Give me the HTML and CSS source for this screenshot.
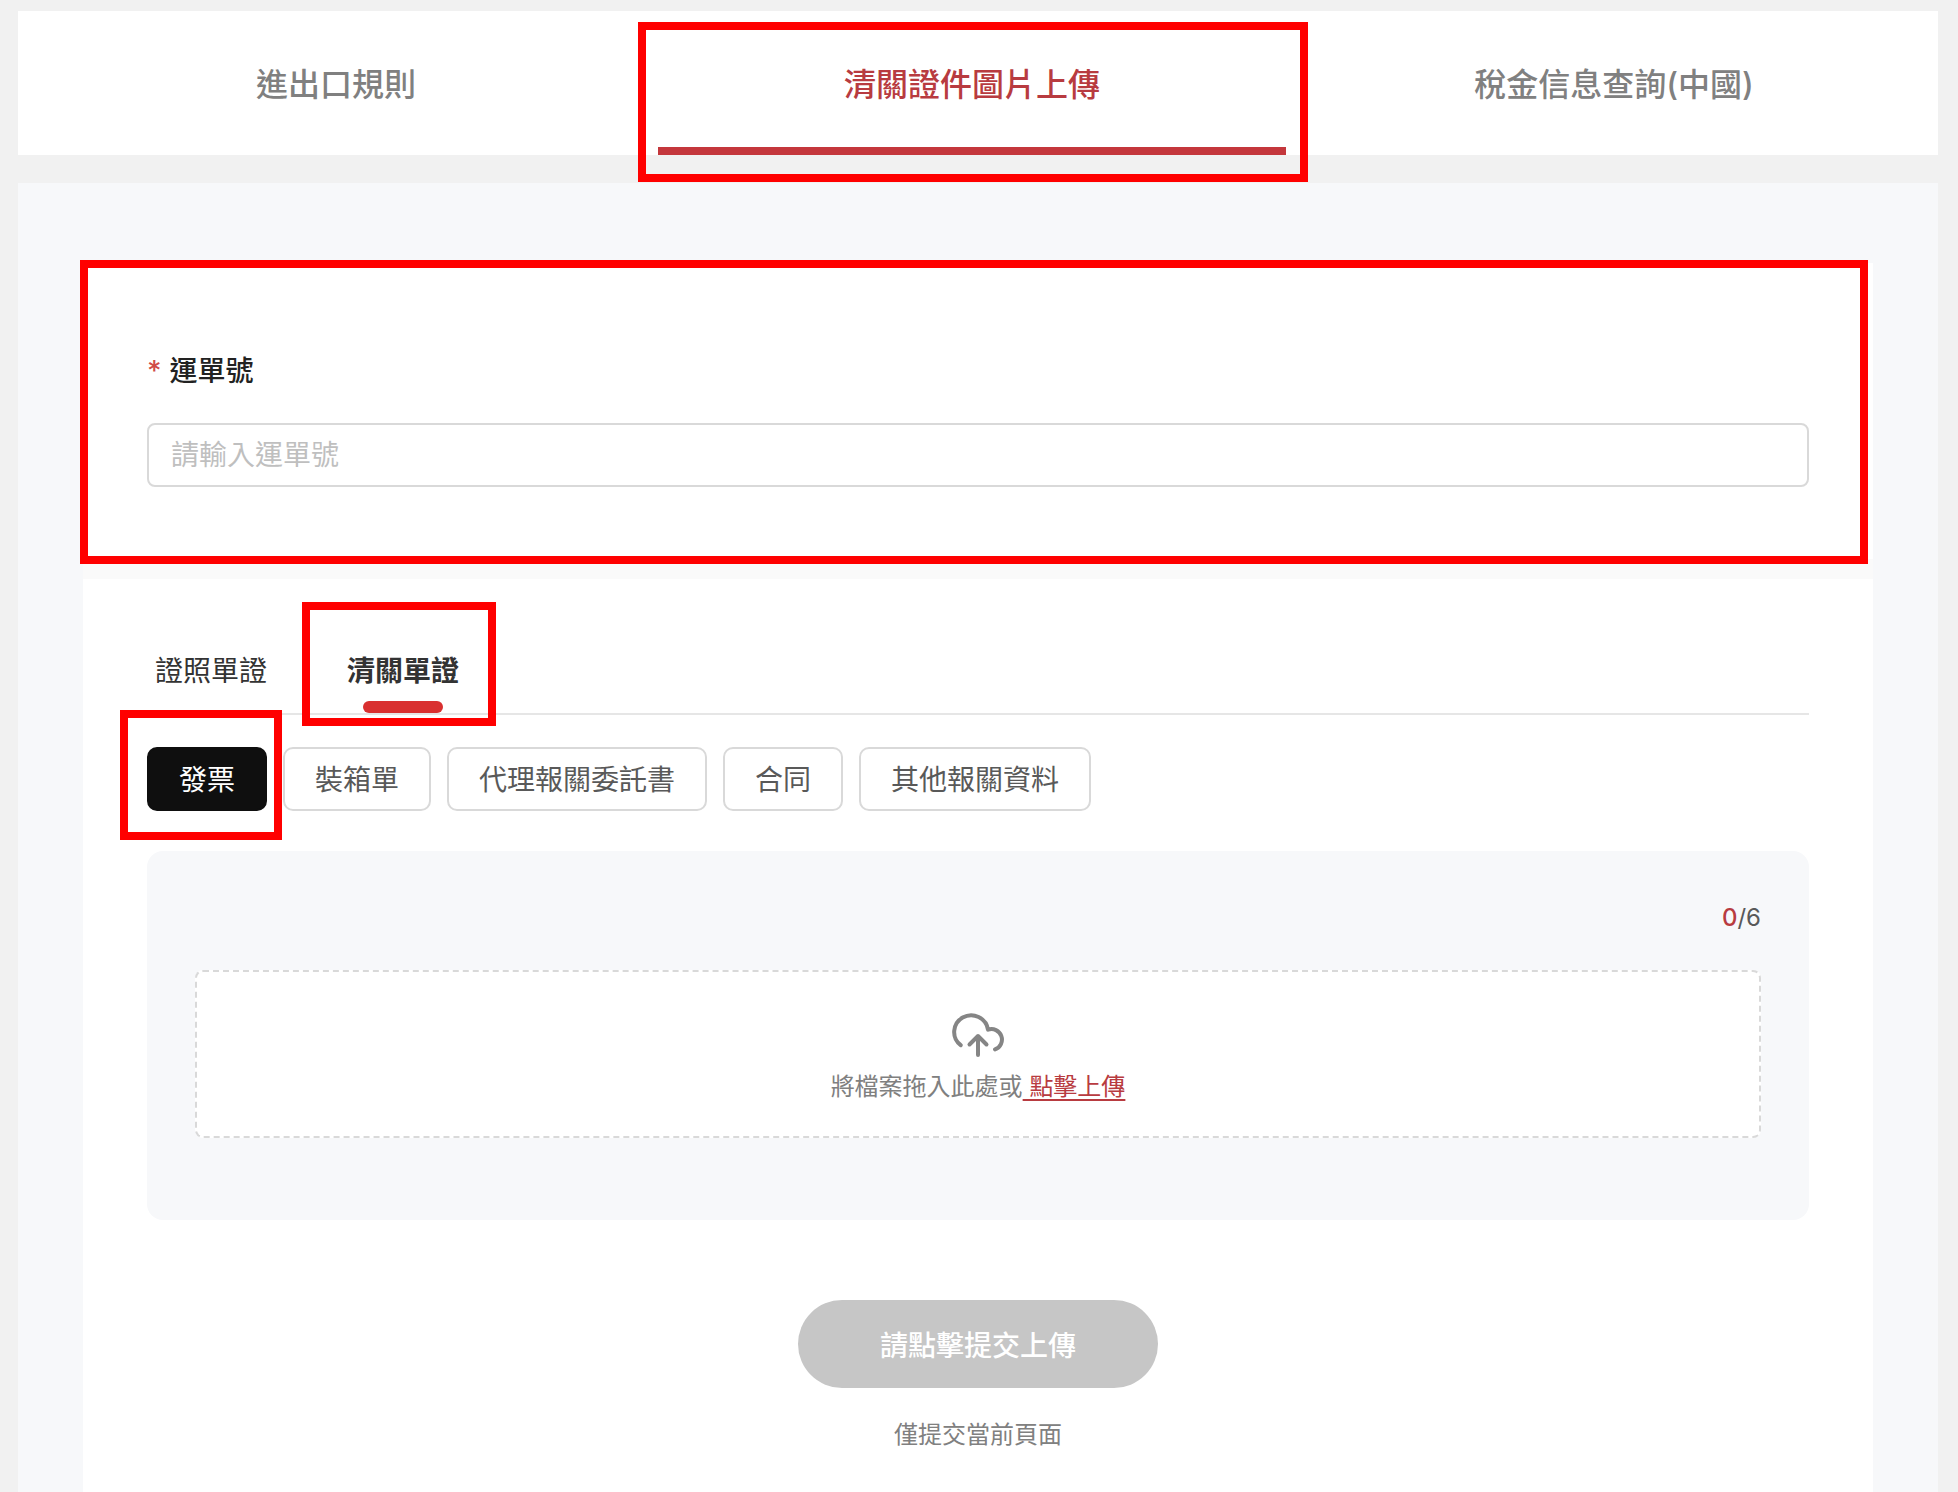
FILE: index.html
```
<!DOCTYPE html>
<html lang="zh-Hant">
<head>
  <meta charset="UTF-8">
  <meta name="viewport" content="width=device-width, initial-scale=1.0">
  <title>清關證件圖片上傳</title>
  <link rel="stylesheet" href="styles.css">
</head>
<body>
  <nav class="main-tabs">
    <button type="button" class="main-tab">進出口規則</button>
    <button type="button" class="main-tab active marked">清關證件圖片上傳</button>
    <button type="button" class="main-tab">稅金信息查詢(中國)</button>
  </nav>

  <main class="content">
    <form class="upload-form">
      <section class="card waybill marked">
        <label class="field-label" for="waybill-no"><span class="required">*</span>運單號</label>
        <input class="field-input" type="text" id="waybill-no" placeholder="請輸入運單號">
      </section>

      <section class="card documents">
        <div class="sub-tabs">
          <button type="button" class="sub-tab">證照單證</button>
          <button type="button" class="sub-tab active marked">清關單證</button>
        </div>

        <div class="chips">
          <button type="button" class="chip active marked">發票</button>
          <button type="button" class="chip">裝箱單</button>
          <button type="button" class="chip">代理報關委託書</button>
          <button type="button" class="chip">合同</button>
          <button type="button" class="chip">其他報關資料</button>
        </div>

        <div class="upload-panel">
          <p class="counter"><span class="count">0</span>/6</p>
          <div class="dropzone">
            <svg class="upload-icon" viewBox="0 0 56 56" aria-hidden="true">
              <path d="M10.7 37.2A17 16.7 0 1 1 38 21.7A10.3 10.3 0 0 1 45 41.4"/>
              <path d="M28 47V28M19.5 36.5L28 28L36.5 36.5"/>
            </svg>
            <p class="drop-text">將檔案拖入此處或<a href="#" class="upload-link">&nbsp;點擊上傳</a></p>
          </div>
        </div>

        <button type="submit" class="submit" disabled>請點擊提交上傳</button>
        <p class="note">僅提交當前頁面</p>
      </section>
    </form>
  </main>
</body>
</html>
```
FILE: styles.css
```
* {
  box-sizing: border-box;
}

body {
  display: flex;
  flex-direction: column;
  gap: 28px;
  min-height: 100vh;
  margin: 0;
  padding: 11px 20px 0 18px;
  background: #f1f1f1;
  color: #333;
  font-family: Inter, "Noto Sans CJK TC", sans-serif;
  font-size: 28px;
}

button,
input {
  font-family: inherit;
  font-size: 28px;
}

button {
  margin: 0;
  padding: 0;
  border: 0;
  background: none;
  color: inherit;
  cursor: pointer;
}

p {
  margin: 0;
}

/* red highlight frames */
.marked {
  position: relative;
}

.marked::after {
  content: "";
  position: absolute;
  z-index: 2;
  border: 8px solid #ff0000;
  pointer-events: none;
}

/* top tabs */
.main-tabs {
  display: grid;
  grid-template-columns: 53fr 53fr 54fr;
  background: #fff;
}

.main-tab {
  height: 144px;
  padding-bottom: 2px;
  color: #808080;
  font-size: 32px;
  font-weight: 500;
}

.main-tab.active {
  color: #b83b40;
}

.main-tab.active::before {
  content: "";
  position: absolute;
  left: 4px;
  right: 4px;
  bottom: 0;
  height: 8px;
  background: #c4373c;
}

.main-tab.marked::after {
  inset: 11px -18px -27px -16px;
}

/* content */
.content {
  display: flex;
  flex: 1;
  padding: 80px 65px 0;
  background: #f7f8fa;
}

.upload-form {
  display: flex;
  flex-direction: column;
  flex: 1;
  gap: 20px;
  background: #fafafa;
}

.card {
  padding: 0 64px;
  background: #fff;
}

.waybill {
  padding-top: 86px;
  padding-bottom: 72px;
}

.waybill.marked::after {
  inset: -3px 5px -5px -3px;
}

.field-label {
  display: flex;
  gap: 8px;
  margin-bottom: 30px;
  color: #222;
  font-weight: 500;
  line-height: 44px;
}

.required {
  color: #d04a48;
}

.field-input {
  display: block;
  width: 100%;
  height: 64px;
  padding: 0 22px;
  border: 2px solid #d9d9d9;
  border-radius: 8px;
  background: #fff;
  color: #222;
}

.field-input::placeholder {
  color: #bfbfbf;
}

.documents {
  display: flex;
  flex-direction: column;
  flex: 1;
  padding-top: 50px;
  padding-bottom: 36px;
}

.sub-tabs {
  display: flex;
  gap: 80px;
  padding-left: 8px;
  border-bottom: 2px solid #e6e6e6;
}

.sub-tab {
  height: 84px;
  padding-bottom: 4px;
}

.sub-tab.active {
  font-weight: 700;
}

.sub-tab.active::before {
  content: "";
  position: absolute;
  left: 16px;
  right: 16px;
  bottom: 0;
  height: 12px;
  border-radius: 6px;
  background: #d93030;
}

.sub-tab.marked::after {
  inset: -27px -37px -13px -45px;
}

.chips {
  display: flex;
  flex-wrap: wrap;
  gap: 16px;
  margin: 32px 0 40px;
}

.chip {
  height: 64px;
  padding: 0 30px 2px;
  border: 2px solid #d9d9d9;
  border-radius: 10px;
  background: #fff;
  color: #595959;
}

.chip.active {
  border-color: #0f0f0f;
  background: #0f0f0f;
  color: #fff;
}

.chip.marked::after {
  inset: -39px -17px -31px -29px;
}

.upload-panel {
  padding: 48px 48px 82px;
  border-radius: 16px;
  background: #f7f8fa;
}

.counter {
  margin-bottom: 33px;
  color: #595959;
  font-size: 24px;
  line-height: 38px;
  text-align: right;
}

.count {
  color: #b83b40;
  font-weight: 500;
}

.dropzone {
  display: flex;
  flex-direction: column;
  align-items: center;
  gap: 5px;
  padding: 36px 16px 31px;
  border: 2px dashed #d9d9d9;
  border-radius: 8px;
  background: #fff;
}

.upload-icon {
  width: 56px;
  height: 56px;
  fill: none;
  stroke: #858585;
  stroke-width: 4;
  stroke-linecap: round;
  stroke-linejoin: round;
}

.drop-text {
  color: #808080;
  font-size: 24px;
  line-height: 36px;
}

.upload-link {
  color: #b83b40;
  text-decoration: underline;
  text-decoration-thickness: 2px;
  text-underline-offset: 4px;
}

.submit {
  align-self: center;
  width: 360px;
  height: 88px;
  margin: 80px 0 29px;
  border-radius: 44px;
  background: #c6c6c6;
  color: #fff;
  font-weight: 500;
  cursor: not-allowed;
}

.note {
  color: #808080;
  font-size: 24px;
  line-height: 36px;
  text-align: center;
}
```
